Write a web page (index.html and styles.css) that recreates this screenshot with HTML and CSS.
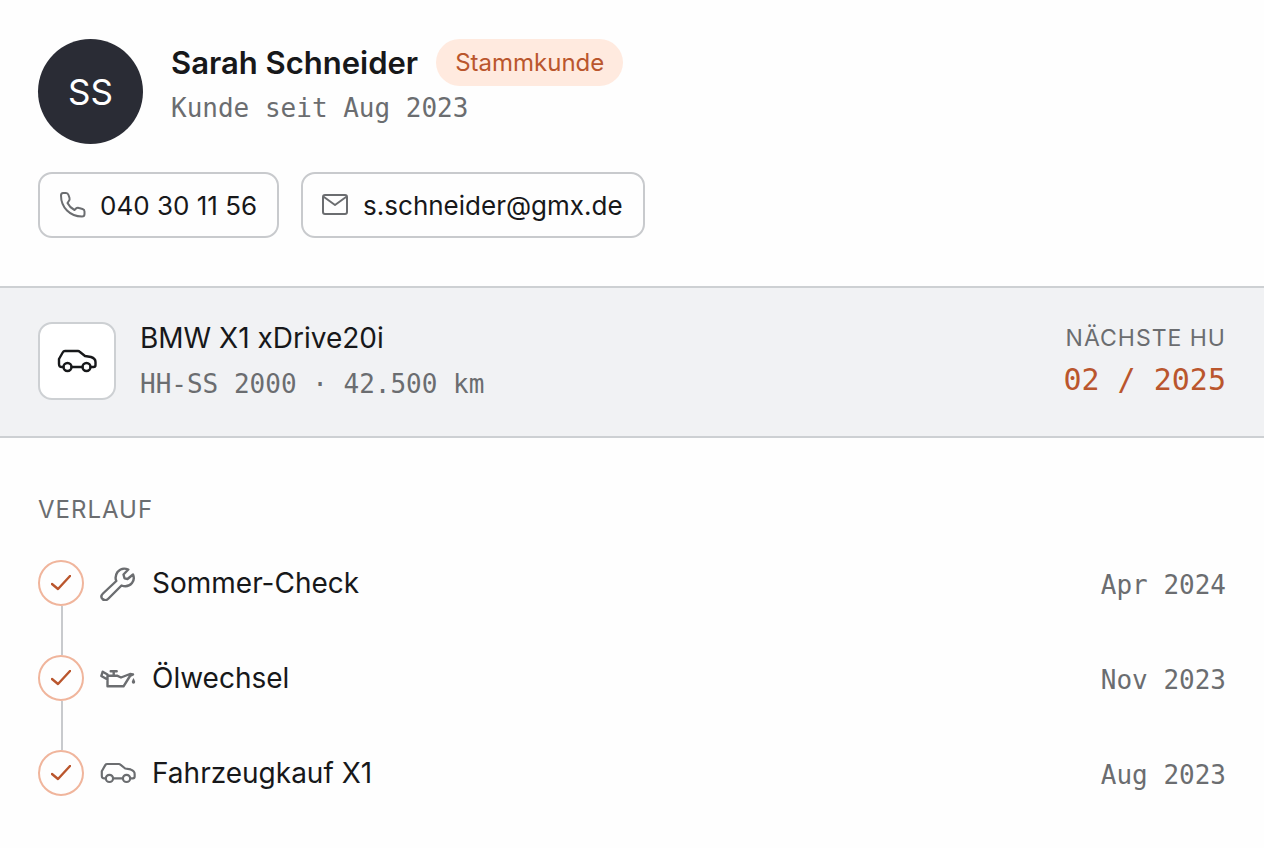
FILE: index.html
```
<!DOCTYPE html>
<html lang="de">
<head>
    <meta charset="UTF-8">
    <meta name="viewport" content="width=device-width, initial-scale=1.0">
    <title>Sarah Schneider - Kundenkarte</title>
    <link rel="stylesheet" href="styles.css">
</head>
<body>
    <svg class="sprite" aria-hidden="true">
        <symbol id="car" viewBox="0 0 40 24">
            <path d="M6.500 18H5Q2 18 2 15V10L6 3Q6.500 2 8 2H21Q22 2 23 3L28 7L34 8Q38.500 9.500 38.500 13V16Q38.500 18 36.500 18H33.500M14.500 18H25.500"/>
            <circle cx="10.500" cy="18" r="4"/>
            <circle cx="29.500" cy="18" r="4"/>
        </symbol>
        <symbol id="check" viewBox="0 0 20 16">
            <path d="M1 9L7 14L19 1"/>
        </symbol>
    </svg>

    <header class="customer">
        <div class="profile">
            <div class="avatar">SS</div>
            <div>
                <div class="name-row">
                    <h1>Sarah Schneider</h1>
                    <span class="badge">Stammkunde</span>
                </div>
                <p class="mono">Kunde seit Aug 2023</p>
            </div>
        </div>
        <div class="contacts">
            <a class="contact" href="tel:040301156">
                <svg class="icon" width="28" height="28" viewBox="0 0 28 28" aria-hidden="true">
                    <path d="M5 2H8C9.500 2 10 2.500 10.500 4L11.500 7C12 8.500 11.500 9.500 10.500 10.500L9.500 12C11 15 13.500 17.500 16.500 19L18 17.500C19 16.500 20 16.500 21 17L24.500 18C26 18.500 26.500 19 26.500 20.500V23C26.500 25 25.500 25.500 24 25.500C12 25.500 3 16.500 3 4.500C3 3 3.500 2 5 2Z"/>
                </svg>
                040 30 11 56
            </a>
            <a class="contact" href="mailto:s.schneider@gmx.de">
                <svg class="icon" width="28" height="28" viewBox="0 0 28 28" aria-hidden="true">
                    <rect x="2" y="4" width="24" height="19" rx="2"/>
                    <path d="M3 6L14 14L25 6"/>
                </svg>
                s.schneider@gmx.de
            </a>
        </div>
    </header>

    <section class="vehicle">
        <div class="vehicle-icon">
            <svg class="icon" width="40" height="24"><use href="#car"/></svg>
        </div>
        <div class="vehicle-info">
            <h2>BMW X1 xDrive20i</h2>
            <p class="mono">HH-SS 2000 · 42.500 km</p>
        </div>
        <div class="inspection">
            <p class="caption">Nächste HU</p>
            <p class="mono due">02 / 2025</p>
        </div>
    </section>

    <section class="history">
        <h3 class="caption">Verlauf</h3>
        <ol class="timeline">
            <li>
                <span class="step"><svg class="icon" width="20" height="16"><use href="#check"/></svg></span>
                <svg class="icon" width="36" height="36" viewBox="0 0 36 36" aria-hidden="true">
                    <path d="M28.300 4.500C24 2.800 20 4 17.500 7C15.500 10 15 13 16.300 16L3 28.500C1 30.500 1 32.500 2.500 34C4.200 35.500 6.500 35.500 8.500 33.500L21.500 20.500C25.500 22 29.500 21 32 18C34 15.500 34.300 12.500 33 9.500L27.500 14L24.500 13.300L23.500 9.500Z"/>
                </svg>
                <span class="task">Sommer-Check</span>
                <time class="mono" datetime="2024-04">Apr 2024</time>
            </li>
            <li>
                <span class="step"><svg class="icon" width="20" height="16"><use href="#check"/></svg></span>
                <svg class="icon" width="36" height="36" viewBox="0 0 36 36" aria-hidden="true">
                    <path d="M7.500 15.700H17L21 17.500L30 14L33 14.500L30 16L23.500 26.300H7.500ZM7.500 19.500L1.300 16L2.700 11.700L7.500 14.500M13.700 15.700V11.300M10.700 11.300H16.700"/>
                    <path class="drop" d="M33.500 18C32.500 20 31.800 21 31.800 22A1.700 1.700 0 0 0 35.200 22C35.200 21 34.500 20 33.500 18Z"/>
                </svg>
                <span class="task">Ölwechsel</span>
                <time class="mono" datetime="2023-11">Nov 2023</time>
            </li>
            <li>
                <span class="step"><svg class="icon" width="20" height="16"><use href="#check"/></svg></span>
                <svg class="icon" width="36" height="24"><use href="#car"/></svg>
                <span class="task">Fahrzeugkauf X1</span>
                <time class="mono" datetime="2023-08">Aug 2023</time>
            </li>
        </ol>
    </section>
</body>
</html>
```
FILE: styles.css
```
* {
    box-sizing: border-box;
}

body {
    margin: 0;
    background: #fefefe;
    color: #17181a;
    font-family: Inter, "Liberation Sans", sans-serif;
    font-size: 28px;
}

h1, h2, h3, p, ol {
    margin: 0;
    padding: 0;
    font-weight: 400;
}

.sprite {
    display: none;
}

.icon {
    flex: none;
    fill: none;
    stroke: #6b6d70;
    stroke-width: 2;
    stroke-linecap: round;
    stroke-linejoin: round;
}

.mono {
    font-family: "DejaVu Sans Mono", "Liberation Mono", monospace;
    font-size: 26px;
    line-height: 36px;
    color: #6b6d70;
}

.caption {
    font-size: 24px;
    line-height: 32px;
    letter-spacing: 1px;
    text-transform: uppercase;
    color: #6b6d70;
}

/* Kundenkopf */
.customer {
    padding: 39px 38px 48px;
}

.profile {
    display: flex;
    gap: 28px;
}

.avatar {
    display: flex;
    align-items: center;
    justify-content: center;
    width: 105px;
    height: 105px;
    border-radius: 50%;
    background: #2a2c35;
    color: #fff;
    font-size: 35px;
}

.name-row {
    display: flex;
    align-items: center;
    gap: 18px;
    margin-bottom: 4px;
}

h1 {
    font-size: 31px;
    font-weight: 600;
}

.badge {
    padding: 8px 19px 7px;
    border-radius: 24px;
    background: #ffeadf;
    color: #ba562d;
    font-size: 24px;
    line-height: 32px;
}

.contacts {
    display: flex;
    gap: 22px;
    margin-top: 28px;
}

.contact {
    display: flex;
    align-items: center;
    gap: 14px;
    height: 66px;
    padding: 0 20px 0 18px;
    border: 2px solid #c8cacd;
    border-radius: 14px;
    color: inherit;
    font-size: 26px;
    text-decoration: none;
}

/* Fahrzeug */
.vehicle {
    display: flex;
    align-items: center;
    gap: 24px;
    padding: 32px 38px 34px;
    border-top: 2px solid #cdd0d3;
    border-bottom: 2px solid #cdd0d3;
    background: #f1f2f4;
}

.vehicle-icon {
    display: flex;
    align-items: center;
    justify-content: center;
    width: 78px;
    height: 78px;
    border: 2px solid #cdd0d3;
    border-radius: 14px;
    background: #fff;
}

.vehicle-icon .icon {
    stroke: #17181a;
    stroke-width: 2.400;
}

.vehicle-info {
    flex: 1;
}

h2 {
    font-size: 28px;
    line-height: 36px;
    margin-bottom: 10px;
}

.inspection {
    text-align: right;
}

.inspection .caption {
    font-size: 23px;
}

.due {
    font-size: 30px;
    line-height: 40px;
    margin-top: 6px;
    color: #ba562d;
}

/* Verlauf */
.history {
    padding: 56px 38px 48px;
}

.timeline {
    display: flex;
    flex-direction: column;
    gap: 49px;
    margin-top: 34px;
    list-style: none;
}

.timeline li {
    position: relative;
    display: flex;
    align-items: center;
    gap: 16px;
    height: 46px;
}

.timeline .icon {
    stroke-width: 2.400;
}

/* Verbindungslinie zum nächsten Eintrag */
.timeline li:not(:last-child)::after {
    content: "";
    position: absolute;
    top: 46px;
    left: 23px;
    width: 2px;
    height: 49px;
    background: #c8cacd;
}

.step {
    display: flex;
    align-items: center;
    justify-content: center;
    width: 46px;
    height: 46px;
    border: 2px solid #f0b59c;
    border-radius: 50%;
}

.step .icon {
    stroke: #ba562d;
}

.task {
    flex: 1;
}

.timeline time {
    padding-top: 4px;
}

.timeline .drop {
    fill: #6b6d70;
    stroke: none;
}
```
